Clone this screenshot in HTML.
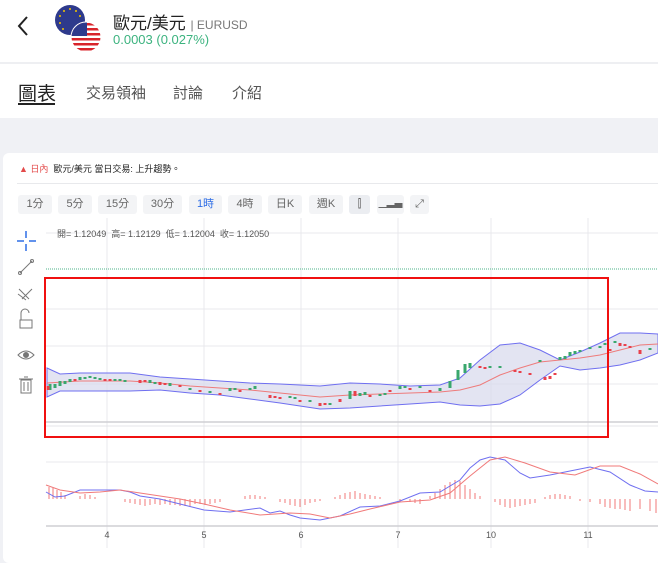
<!DOCTYPE html>
<html><head><meta charset="utf-8"><style>
*{margin:0;padding:0;box-sizing:border-box}
body{width:658px;height:558px;overflow:hidden;background:#f0f1f5;font-family:"Liberation Sans","Noto Sans CJK TC",sans-serif;position:relative}
.top{position:absolute;left:0;top:0;width:658px;height:118px;background:#fff}
.hr{position:absolute;left:0;top:62px;width:658px;height:2px;background:#eeeff2}
.t{position:absolute;white-space:nowrap}
.card{position:absolute;left:3px;top:153px;width:660px;height:410px;background:#fff;border-radius:6px}
.btn{position:absolute;top:195px;height:19px;background:#f3f4f6;border-radius:3px;font-size:11px;color:#666;text-align:center;line-height:19px}
</style></head><body>
<div class="top"></div><div class="hr"></div>
<svg class="t" style="left:16px;top:15px" width="14" height="22"><path d="M11 2 L3 11 L11 20" fill="none" stroke="#222" stroke-width="2"/></svg>
<svg class="t" style="left:54px;top:4px" width="50" height="48">
<circle cx="16" cy="16" r="15" fill="#2e3a8c"/>
<g fill="#f3c300"><circle cx="16" cy="5" r="1"/><circle cx="22" cy="7" r="1"/><circle cx="26" cy="12" r="1"/><circle cx="10" cy="7" r="1"/><circle cx="6" cy="12" r="1"/><circle cx="6" cy="19" r="1"/><circle cx="9" cy="25" r="1"/></g>
<circle cx="32" cy="33" r="15.5" fill="#fff"/>
<clipPath id="c"><circle cx="32" cy="33" r="14.5"/></clipPath>
<g clip-path="url(#c)"><rect x="16" y="18" width="34" height="32" fill="#fff"/>
<g fill="#d8232a"><rect x="16" y="19" width="34" height="2.5"/><rect x="16" y="24" width="34" height="2.5"/><rect x="16" y="29" width="34" height="2.5"/><rect x="16" y="34" width="34" height="2.5"/><rect x="16" y="39" width="34" height="2.5"/><rect x="16" y="44" width="34" height="2.5"/></g>
<rect x="16" y="18" width="17" height="14" fill="#2e3a8c"/></g></svg>
<div class="t" style="left:113px;top:9px;font-size:17px;color:#222">歐元/美元 <span style="font-size:12px;color:#777">| EURUSD</span></div>
<div class="t" style="left:113px;top:32px;font-size:13px;color:#3cb37f">0.0003 (0.027%)</div>
<div class="t" style="left:18px;top:79px;font-size:19px;color:#222">圖表</div>
<div class="t" style="left:18px;top:103px;width:37px;height:2px;background:#222"></div>
<div class="t" style="left:86px;top:82px;font-size:15px;color:#555">交易領袖</div>
<div class="t" style="left:173px;top:82px;font-size:15px;color:#555">討論</div>
<div class="t" style="left:232px;top:82px;font-size:15px;color:#555">介紹</div>
<div class="card"></div>
<div class="t" style="left:19px;top:162px;font-size:9px;color:#e34a4a">▲ 日內 <span style="color:#222">&nbsp;歐元/美元 當日交易: 上升趨勢。</span></div>
<div class="t" style="left:17px;top:183px;width:641px;height:1px;background:#e8e9ec"></div>
<div class="btn" style="left:18px;width:34px">1分</div>
<div class="btn" style="left:58px;width:34px">5分</div>
<div class="btn" style="left:98px;width:39px">15分</div>
<div class="btn" style="left:143px;width:39px">30分</div>
<div class="btn" style="left:189px;width:33px;color:#2f6ee6">1時</div>
<div class="btn" style="left:228px;width:34px">4時</div>
<div class="btn" style="left:268px;width:34px">日K</div>
<div class="btn" style="left:309px;width:34px">週K</div>
<div class="btn" style="left:349px;width:21px;background:#ebedf1">⫿</div>
<div class="btn" style="left:377px;width:27px;font-size:8px">▁▃▅</div>
<div class="btn" style="left:410px;width:19px">⤢</div>
<svg class="t" style="left:0;top:210px" width="658" height="348">
<g stroke="#e9e9ec" stroke-width="1" fill="none">
<path d="M107 8V338M204 8V338M301 8V338M398 8V338M491 8V338M588 8V338"/>
<path d="M46 23H658M46 99H658M46 136H658M46 174H658M46 252H658"/>
</g>
<path d="M46 59H658" stroke="#4db38a" stroke-width="1" stroke-dasharray="1 1"/>
<path d="M46 212H658M46 316H658" stroke="#cfcfd3" stroke-width="1.5"/>
<path d="M46 216H658" stroke="#e5e5e8"/>
<path d="M17 31H24M29 31H36M26 21V28M26 34V41" stroke="#2f6ee6" stroke-width="1.5"/>
<g stroke="#777" fill="none" stroke-width="1"><path d="M20 63L32 51"/><circle cx="20" cy="63" r="1.5"/><circle cx="32" cy="51" r="1.5"/>
<path d="M19 79L29 89M22 89L32 79M18 84L26 90"/>
<path d="M21 110V103a4 4 0 0 1 8 0M20 110h12v8h-12z"/>
<path d="M18 145q8-8 16 0q-8 8-16 0z"/><circle cx="26" cy="145" r="2.5" fill="#777"/>
<path d="M21 170h10v13h-10zM19 169h14M24 167h4M24 172v9M28 172v9"/></g>
<text x="57" y="27" font-size="9" fill="#555" font-family="Liberation Sans,Noto Sans CJK TC,sans-serif">開= 1.12049 &#160;高= 1.12129 &#160;低= 1.12004 &#160;收= 1.12050</text>
<path d="M47 158L60 164L80 163L100 163L130 163L160 167L190 169L220 171L250 173L280 174L300 175L320 176L350 173L380 174L410 176L440 175L460 168L480 150L500 135L520 133L540 140L560 150L580 142L600 133L620 123L640 123L658 124 L658 143L640 150L620 155L600 158L580 160L560 156L540 170L520 185L500 194L480 196L460 195L440 192L410 194L380 196L350 198L320 199L300 196L280 193L250 189L220 185L190 183L160 180L130 181L100 181L80 181L60 181L47 187Z" fill="#d7d8ec" fill-opacity="0.7" stroke="#6f6ff0" stroke-width="1"/>
<path d="M47 173L80 171L130 171L160 173L190 176L220 178L250 180L280 183L300 185L320 187L350 185L380 184L410 183L440 182L460 180L480 175L500 165L520 158L540 152L560 150L580 148L600 145L620 140L640 135L658 134" fill="none" stroke="#ee7b7b" stroke-width="1"/>
<g stroke-width="3">
<path d="M50 180v-6M55 178v-4M60 176v-5M65 174v-3M70 172v-3M80 170v-3M85 169v-2M90 168v-2M95 169v-2M100 170v-2M115 171v-2M120 171v-2M125 172v-2M150 173v-3M155 174v-2M170 176v-3M190 180v-2M210 183v-2M230 181v-3M235 180v-2M250 180v-2M255 179v-3M290 188v-2M295 189v-2M310 192v-2M330 195v-2M350 189v-8M360 186v-3M365 185v-3M380 186v-2M385 185v-2M400 179v-3M405 178v-2M420 178v-2M440 181v-3M450 178v-7M458 170v-10M465 163v-9M470 158v-5M490 158v-2M500 158v-2M540 152v-2M560 150v-3M565 149v-3M570 146v-4M575 144v-3M580 142v-2M590 139v-2M600 138v-2M605 135v-2M615 133v-2M650 140v-2"stroke="#3aa76d"/>
<path d="M48 176v4M75 169v2M105 169v2M110 169v2M140 170v3M145 170v2M160 172v3M165 173v2M180 175v2M200 180v2M220 183v2M240 180v2M270 185v3M275 186v2M280 187v2M300 190v2M320 193v3M325 193v2M340 189v3M355 181v5M370 185v2M390 180v2M410 178v2M430 180v2M480 156v2M485 157v2M515 160v2M520 161v2M530 163v2M545 167v3M550 166v3M555 163v2M610 139v2M620 133v3M625 134v2M630 136v2M640 140v4"stroke="#e8404b"/>
</g>
<rect x="45" y="68" width="563" height="159" fill="none" stroke="#f01010" stroke-width="2"/>
<g stroke="#f07a7a" stroke-width="1">
<path d="M49 289v-12M53 289v-11M57 289v-9M61 289v-7M65 289v-4M80 289v-3M85 289v-5M90 289v-4M95 289v-2M125 289v3M130 289v4M135 289v5M140 289v6M145 289v7M150 289v6M155 289v5M160 289v6M165 289v5M170 289v6M175 289v6M180 289v7M185 289v7M190 289v7M195 289v5M200 289v5M205 289v6M210 289v5M215 289v4M220 289v3M245 289v-3M250 289v-4M255 289v-4M260 289v-3M265 289v-2M280 289v3M285 289v4M290 289v6M295 289v7M300 289v8M305 289v6M310 289v4M315 289v3M320 289v2M335 289v-2M340 289v-4M345 289v-6M350 289v-7M355 289v-8M360 289v-6M365 289v-5M370 289v-4M375 289v-3M380 289v-2M400 289v2M410 289v3M415 289v4M420 289v5M430 289v-3M435 289v-6M440 289v-10M445 289v-14M450 289v-17M455 289v-19M460 289v-18M465 289v-14M470 289v-10M475 289v-6M480 289v-3M495 289v3M500 289v6M505 289v8M510 289v9M515 289v8M520 289v7M525 289v6M530 289v5M535 289v4M545 289v-2M550 289v-4M555 289v-5M560 289v-5M565 289v-4M570 289v-3M580 289v2M590 289v3M600 289v5M605 289v8M610 289v9M615 289v10M620 289v10M625 289v11M630 289v12M640 289v10M650 289v12M656 289v14"/>
</g>
<path d="M46 282L55 287L65 286L80 280L100 280L120 280L130 282L140 286L160 289L180 294L204 300L230 302L260 298L270 303L280 301L290 305L300 308L320 310L340 306L360 297L380 296L400 291L420 283L440 282L460 270L470 258L480 250L490 247L505 250L520 263L530 268L550 265L570 261L590 257L610 262L630 275L645 281L658 282" fill="none" stroke="#6f6ff0" stroke-width="1"/>
<path d="M46 275L60 280L80 283L100 282L120 280L140 283L160 286L180 289L204 294L230 300L260 305L290 303L310 304L330 308L350 304L370 299L400 292L430 290L450 283L470 266L490 250L505 247L525 253L550 262L575 265L600 256L620 256L640 264L658 274" fill="none" stroke="#f07a7a" stroke-width="1"/>
<g font-size="9" fill="#555" text-anchor="middle" font-family="Liberation Sans,sans-serif"><text x="107" y="328">4</text><text x="204" y="328">5</text><text x="301" y="328">6</text><text x="398" y="328">7</text><text x="491" y="328">10</text><text x="588" y="328">11</text></g>
</svg>
</body></html>
